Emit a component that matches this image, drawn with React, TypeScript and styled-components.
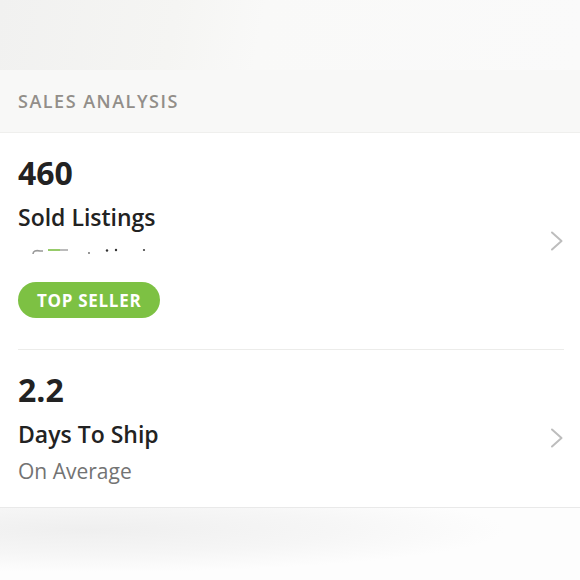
import React from "react";
import styled, { createGlobalStyle } from "styled-components";

const GlobalStyle = createGlobalStyle`
  html, body {
    margin: 0;
    padding: 0;
    background: #fcfcfc;
  }
  body {
    font-family: "Open Sans", "Lato", sans-serif;
    -webkit-font-smoothing: antialiased;
  }
`;

const Chevron = () => (
  <svg width="14" height="20" viewBox="0 0 14 20" fill="none">
    <path d="M2 1.5l9.5 8.5-9.5 8.5" stroke="#bdbdbd" strokeWidth="2" strokeLinecap="round" strokeLinejoin="round" />
  </svg>
);

// smeared pixels left over from a cut-off line in the screenshot
const Smear = () => (
  <svg width="150" height="10" viewBox="0 0 150 10">
    <path d="M15 8c0-3 3-4 7-3h3" stroke="#999" strokeWidth="1.6" fill="none" />
    <path d="M30 4h12" stroke="#8cc65a" strokeWidth="1.8" />
    <path d="M42 4h8" stroke="#aaa" strokeWidth="1.6" />
    <circle cx="71" cy="7" r="0.9" fill="#666" />
    <circle cx="89" cy="4.5" r="1.2" fill="#333" />
    <circle cx="98" cy="4" r="1.2" fill="#333" />
    <circle cx="126" cy="4" r="1.1" fill="#444" />
  </svg>
);

const App = () => {
  return (
    <Page>
      <GlobalStyle />
      <TopShade />
      <SectionHeader>SALES ANALYSIS</SectionHeader>
      <Card>
        <Row>
          <Info>
            <Number>460</Number>
            <Title>Sold Listings</Title>
            <SmearLine>
              <Smear />
            </SmearLine>
            <Badge>TOP SELLER</Badge>
          </Info>
          <ChevronBox offset={10}>
            <Chevron />
          </ChevronBox>
        </Row>
        <Row last>
          <Info>
            <Number>2.2</Number>
            <Title>Days To Ship</Title>
            <Sub>On Average</Sub>
          </Info>
          <ChevronBox offset={20}>
            <Chevron />
          </ChevronBox>
        </Row>
      </Card>
      <BottomShade />
    </Page>
  );
};

export default App;

const Page = styled.div`
  width: 580px;
  height: 580px;
  overflow: hidden;
  display: flex;
  flex-direction: column;
`;

const TopShade = styled.div`
  height: 70px;
  flex-shrink: 0;
  background: linear-gradient(100deg, #f1f1f0 0%, #f5f5f3 30%, #f9f9f8 45%, #fafafa 100%);
`;

const SectionHeader = styled.div`
  height: 63px;
  flex-shrink: 0;
  box-sizing: border-box;
  padding: 0 18px;
  display: flex;
  align-items: center;
  background: #f8f8f7;
  color: #928e89;
  font-size: 18px;
  font-weight: 600;
  letter-spacing: 1.5px;
  border-bottom: 1px solid #efefed;
`;

const Card = styled.div`
  flex-shrink: 0;
  background: #ffffff;
  padding-left: 18px;
  border-bottom: 1px solid #e9e9e9;
`;

const Row = styled.div<{ last?: boolean }>`
  display: flex;
  align-items: center;
  justify-content: space-between;
  margin-right: 16px;
  padding: 20px 0 ${(p) => (p.last ? "21px" : "31px")} 0;
  border-bottom: ${(p) => (p.last ? "none" : "1px solid #ececea")};
`;

const Info = styled.div`
  display: flex;
  flex-direction: column;
  align-items: flex-start;
`;

const ChevronBox = styled.div<{ offset: number }>`
  display: flex;
  margin-top: ${(p) => p.offset}px;
`;

const Number = styled.div`
  font-size: 32px;
  line-height: 40px;
  font-weight: 700;
  color: #222222;
`;

const Title = styled.div`
  margin-top: 7px;
  font-size: 23px;
  line-height: 34px;
  font-weight: 600;
  color: #222222;
`;

const Sub = styled.div`
  margin-top: 5px;
  font-size: 21px;
  line-height: 30px;
  color: #737373;
`;

const SmearLine = styled.div`
  margin-top: 12px;
  height: 10px;
  display: flex;
`;

const Badge = styled.div`
  margin-top: 26px;
  height: 36px;
  padding: 0 19px;
  border-radius: 18px;
  background: #7dc143;
  color: #ffffff;
  font-size: 17px;
  font-weight: 700;
  letter-spacing: 0.7px;
  display: flex;
  align-items: center;
`;

const BottomShade = styled.div`
  flex: 1;
  background: radial-gradient(ellipse at 15% 30%, #efefef 0%, #f6f6f6 35%, #fdfdfd 60%);
`;
